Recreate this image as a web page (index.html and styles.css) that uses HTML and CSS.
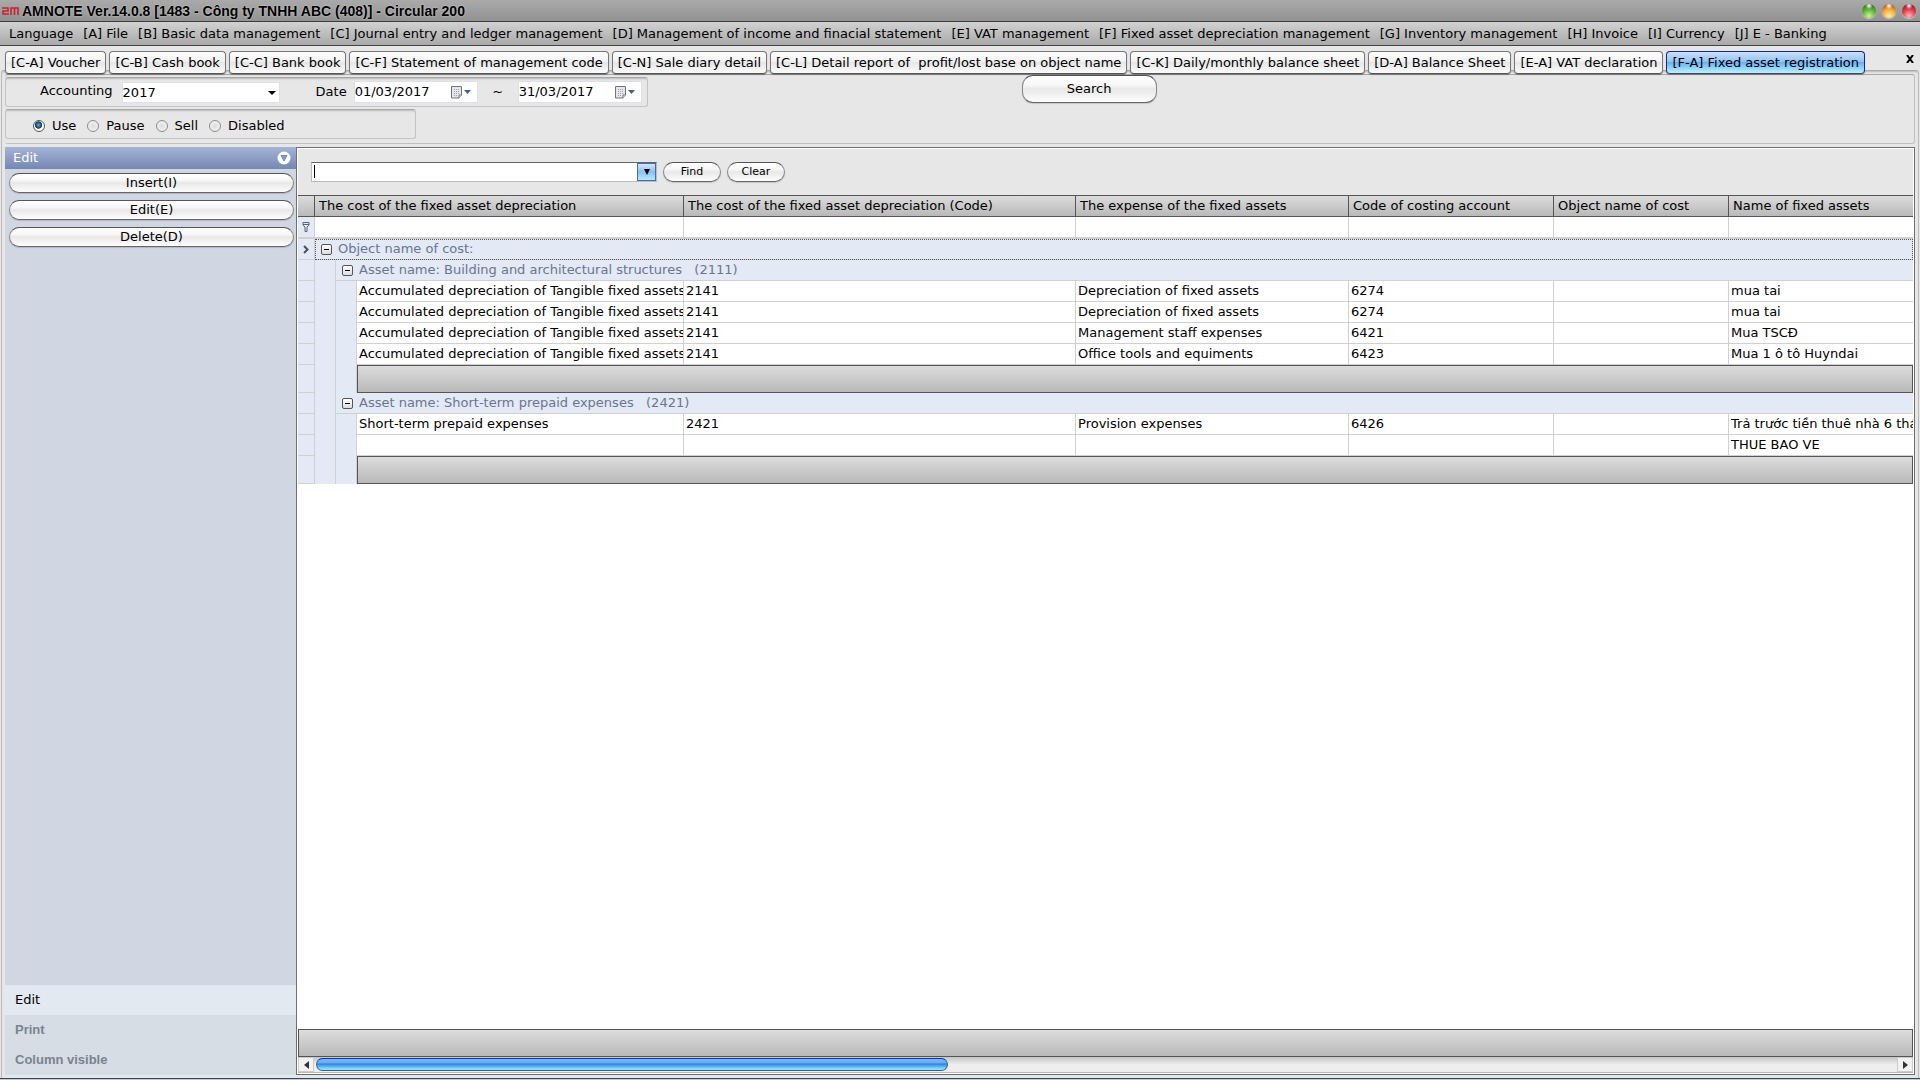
FILE: index.html
```html
<!DOCTYPE html>
<html lang="en">

<head>
    <meta charset="UTF-8">
    <meta name="viewport" content="width=device-width, initial-scale=1.0">
    <title>AMNOTE - Fixed asset registration</title>
    <link rel="stylesheet" href="styles.css">
</head>

<body>
    <header class="titlebar">
        <svg class="logo" width="18" height="10" viewBox="0 0 18 10" fill="none" stroke="#c8232c" stroke-width="1.600">
            <path d="M0 2H6V5H1V8H7M9 9V2H16V9M12.500 2V9" />
        </svg>
        <h1>AMNOTE Ver.14.0.8 [1483 - Công ty TNHH ABC (408)] - Circular 200</h1>
        <div class="window-buttons">
            <button class="dot dot-green" aria-label="Minimize"></button>
            <button class="dot dot-orange" aria-label="Restore"></button>
            <button class="dot dot-red" aria-label="Close"></button>
        </div>
    </header>

    <nav class="menubar">
        <a href="#">Language</a>
        <a href="#">[A] File</a>
        <a href="#">[B] Basic data management</a>
        <a href="#">[C] Journal entry and ledger management</a>
        <a href="#">[D] Management of income and finacial statement</a>
        <a href="#">[E] VAT management</a>
        <a href="#">[F] Fixed asset depreciation management</a>
        <a href="#">[G] Inventory management</a>
        <a href="#">[H] Invoice</a>
        <a href="#">[I] Currency</a>
        <a href="#">[J] E - Banking</a>
    </nav>

    <div class="tabs">
        <button class="tab">[C-A] Voucher</button>
        <button class="tab">[C-B] Cash book</button>
        <button class="tab">[C-C] Bank book</button>
        <button class="tab">[C-F] Statement of management code</button>
        <button class="tab">[C-N] Sale diary detail</button>
        <button class="tab">[C-L] Detail report of&nbsp; profit/lost base on object name</button>
        <button class="tab">[C-K] Daily/monthly balance sheet</button>
        <button class="tab">[D-A] Balance Sheet</button>
        <button class="tab">[E-A] VAT declaration</button>
        <button class="tab active">[F-A] Fixed asset registration</button>
        <button class="tab-close" aria-label="Close tab">
            <svg width="8" height="8" viewBox="0 0 8 8" stroke="#000" stroke-width="2"><path d="M1 0L7 8M7 0L1 8" /></svg>
        </button>
    </div>

    <main class="page">
        <form class="filters">
            <div class="groups">
                <div class="group period">
                    <label class="label-accounting" for="accounting">Accounting</label>
                    <span class="select">
                        <select id="accounting">
                            <option>2017</option>
                        </select>
                    </span>
                    <label class="label-date" for="from">Date</label>
                    <span class="date">
                        <input id="from" type="text" value="01/03/2017">
                        <button type="button" aria-label="Pick start date">
                            <svg width="20" height="13" viewBox="0 0 20 13">
                                <path d="M.5 .5H10.500V9L8 12H.5Z" fill="#e4e6ea" stroke="#77736f" />
                                <path d="M3 3.500H9M3 5.500H9M3 7.500H9M3 9.500H7" stroke="#98a4b8" stroke-dasharray="1 1" />
                                <path d="M8 12V9H10.500" fill="#fff" stroke="#77736f" />
                                <path d="M13 4H20L16.500 8Z" fill="#3f5f95" />
                            </svg>
                        </button>
                    </span>
                    <span class="tilde">~</span>
                    <span class="date">
                        <input id="to" type="text" value="31/03/2017" aria-label="End date">
                        <button type="button" aria-label="Pick end date">
                            <svg width="20" height="13" viewBox="0 0 20 13">
                                <path d="M.5 .5H10.500V9L8 12H.5Z" fill="#e4e6ea" stroke="#77736f" />
                                <path d="M3 3.500H9M3 5.500H9M3 7.500H9M3 9.500H7" stroke="#98a4b8" stroke-dasharray="1 1" />
                                <path d="M8 12V9H10.500" fill="#fff" stroke="#77736f" />
                                <path d="M13 4H20L16.500 8Z" fill="#3f5f95" />
                            </svg>
                        </button>
                    </span>
                </div>
                <div class="group status">
                    <label><input type="radio" name="status" checked>Use</label>
                    <label><input type="radio" name="status">Pause</label>
                    <label><input type="radio" name="status">Sell</label>
                    <label><input type="radio" name="status">Disabled</label>
                </div>
            </div>
            <button class="btn btn-search" type="button">Search</button>
        </form>

        <div class="content">
            <aside class="sidebar">
                <div class="sidebar-head">
                    <span>Edit</span>
                    <svg width="14" height="14" viewBox="0 0 14 14">
                        <circle cx="7" cy="7" r="6.500" fill="#fff" />
                        <path d="M4 4.500H10L7 10Z" fill="#8b9cc6" stroke="#7486b4" />
                    </svg>
                </div>
                <div class="actions">
                    <button class="btn">Insert(I)</button>
                    <button class="btn">Edit(E)</button>
                    <button class="btn">Delete(D)</button>
                </div>
                <nav class="sections">
                    <a class="active" href="#">Edit</a>
                    <a href="#">Print</a>
                    <a href="#">Column visible</a>
                </nav>
            </aside>

            <section class="grid">
                <div class="finder">
                    <div class="combo">
                        <input type="text" aria-label="Find text">
                        <button aria-label="Search history">
                            <svg width="6" height="6" viewBox="0 0 6 6"><path d="M0 0H6L3 6Z" /></svg>
                        </button>
                    </div>
                    <button class="btn btn-small">Find</button>
                    <button class="btn btn-small">Clear</button>
                </div>

                <div class="table-wrap">
                    <table>
                        <colgroup>
                            <col class="c-mark">
                            <col class="c-indent">
                            <col class="c-indent">
                            <col class="c-cost">
                            <col class="c-cost-code">
                            <col class="c-expense">
                            <col class="c-account">
                            <col class="c-object">
                            <col>
                        </colgroup>
                        <thead>
                            <tr>
                                <th></th>
                                <th colspan="3">The cost of the fixed asset depreciation</th>
                                <th>The cost of the fixed asset depreciation (Code)</th>
                                <th>The expense of the fixed assets</th>
                                <th>Code of costing account</th>
                                <th>Object name of cost</th>
                                <th>Name of fixed assets</th>
                            </tr>
                        </thead>
                        <tbody>
                            <tr class="filter-row">
                                <td class="mark">
                                    <svg width="8" height="10" viewBox="0 0 8 10" fill="none" stroke="#5b6577"><path d="M1 .5H7V3L5 5V9.500H3V5L1 3ZM1 2.500H7" /></svg>
                                </td>
                                <td colspan="3"><input type="text" aria-label="Filter cost"></td>
                                <td><input type="text" aria-label="Filter cost code"></td>
                                <td><input type="text" aria-label="Filter expense"></td>
                                <td><input type="text" aria-label="Filter account"></td>
                                <td><input type="text" aria-label="Filter object"></td>
                                <td><input type="text" aria-label="Filter name"></td>
                            </tr>
                            <tr class="group-row focused">
                                <td class="mark">
                                    <svg width="6" height="9" viewBox="0 0 6 9" fill="none" stroke="#46505f" stroke-width="2"><path d="M1 1L4.500 4.500L1 8" /></svg>
                                </td>
                                <td colspan="8"><button class="toggle" aria-label="Collapse"></button>Object name of cost:</td>
                            </tr>
                            <tr class="group-row">
                                <td class="mark"></td>
                                <td class="indent"></td>
                                <td colspan="7"><button class="toggle" aria-label="Collapse"></button>Asset name: Building and architectural structures &nbsp;&nbsp;(2111)</td>
                            </tr>
                            <tr>
                                <td class="mark"></td>
                                <td class="indent"></td>
                                <td class="indent"></td>
                                <td>Accumulated depreciation of Tangible fixed assets</td>
                                <td>2141</td>
                                <td>Depreciation of fixed assets</td>
                                <td>6274</td>
                                <td></td>
                                <td>mua tai</td>
                            </tr>
                            <tr>
                                <td class="mark"></td>
                                <td class="indent"></td>
                                <td class="indent"></td>
                                <td>Accumulated depreciation of Tangible fixed assets</td>
                                <td>2141</td>
                                <td>Depreciation of fixed assets</td>
                                <td>6274</td>
                                <td></td>
                                <td>mua tai</td>
                            </tr>
                            <tr>
                                <td class="mark"></td>
                                <td class="indent"></td>
                                <td class="indent"></td>
                                <td>Accumulated depreciation of Tangible fixed assets</td>
                                <td>2141</td>
                                <td>Management staff expenses</td>
                                <td>6421</td>
                                <td></td>
                                <td>Mua TSCĐ</td>
                            </tr>
                            <tr>
                                <td class="mark"></td>
                                <td class="indent"></td>
                                <td class="indent"></td>
                                <td>Accumulated depreciation of Tangible fixed assets</td>
                                <td>2141</td>
                                <td>Office tools and equiments</td>
                                <td>6423</td>
                                <td></td>
                                <td>Mua 1 ô tô Huyndai</td>
                            </tr>
                            <tr class="summary-row">
                                <td class="mark"></td>
                                <td class="indent"></td>
                                <td class="indent"></td>
                                <td class="summary" colspan="6"></td>
                            </tr>
                            <tr class="group-row">
                                <td class="mark"></td>
                                <td class="indent"></td>
                                <td colspan="7"><button class="toggle" aria-label="Collapse"></button>Asset name: Short-term prepaid expenses &nbsp;&nbsp;(2421)</td>
                            </tr>
                            <tr>
                                <td class="mark"></td>
                                <td class="indent"></td>
                                <td class="indent"></td>
                                <td>Short-term prepaid expenses</td>
                                <td>2421</td>
                                <td>Provision expenses</td>
                                <td>6426</td>
                                <td></td>
                                <td>Trả trước tiền thuê nhà 6 thá</td>
                            </tr>
                            <tr>
                                <td class="mark"></td>
                                <td class="indent"></td>
                                <td class="indent"></td>
                                <td></td>
                                <td></td>
                                <td></td>
                                <td></td>
                                <td></td>
                                <td>THUE BAO VE</td>
                            </tr>
                            <tr class="summary-row">
                                <td class="mark"></td>
                                <td class="indent"></td>
                                <td class="indent"></td>
                                <td class="summary" colspan="6"></td>
                            </tr>
                        </tbody>
                    </table>
                </div>

                <div class="total"></div>
                <div class="scrollbar">
                    <button aria-label="Scroll left">
                        <svg width="5" height="8" viewBox="0 0 5 8" fill="#333"><path d="M5 0V8L0 4Z" /></svg>
                    </button>
                    <div class="track">
                        <div class="thumb"></div>
                    </div>
                    <button aria-label="Scroll right">
                        <svg width="5" height="8" viewBox="0 0 5 8" fill="#333"><path d="M0 0V8L5 4Z" /></svg>
                    </button>
                </div>
            </section>
        </div>
    </main>
    <footer class="edge"></footer>
</body>

</html>
```

FILE: styles.css
```css
* {
    padding: 0;
    margin: 0;
    box-sizing: border-box;
}

body {
    display: flex;
    flex-direction: column;
    height: 100vh;
    overflow: hidden;
    background: #e7e7e7;
    color: #000;
    font: 13px/20px Verdana, "DejaVu Sans", sans-serif;
}

button,
input,
select {
    font: inherit;
    color: inherit;
    border: none;
    background: none;
    outline: none;
    appearance: none;
}

a {
    color: inherit;
    text-decoration: none;
}

/* title bar */
.titlebar {
    display: flex;
    align-items: center;
    height: 22px;
    padding: 0 4px 0 2px;
    background: linear-gradient(#aaa, #929292);
    border-bottom: 1px solid #3c3c3c;
    flex: none;
}

.titlebar h1 {
    flex: 1;
    margin-left: 2px;
    font: bold 14px/20px "Liberation Sans", Arial, sans-serif;
    text-shadow: 0 0 2px #ddd;
}

.window-buttons {
    display: flex;
    gap: 6px;
}

.dot {
    width: 14px;
    height: 14px;
    border-radius: 50%;
    box-shadow: 0 1px 1px #ccc;
}

.dot-green {
    background: radial-gradient(circle at 50% 12%, #fff, transparent 25%), radial-gradient(circle at 50% 85%, #c8f890, #5fae38 50%, #24581a);
}

.dot-orange {
    background: radial-gradient(circle at 50% 12%, #fff, transparent 25%), radial-gradient(circle at 50% 85%, #fff0a0, #f0a83a 50%, #8a3412);
}

.dot-red {
    background: radial-gradient(circle at 50% 12%, #fff, transparent 25%), radial-gradient(circle at 50% 85%, #ffb8b8, #dc3c4a 50%, #6e0c14);
}

/* menu */
.menubar {
    display: flex;
    align-items: center;
    gap: 10px;
    height: 24px;
    padding: 0 9px;
    background: linear-gradient(#d2d2d2, #a9a9a9);
    border-bottom: 1px solid #444;
    white-space: nowrap;
    flex: none;
}

/* tabs */
.tabs {
    position: relative;
    z-index: 1;
    display: flex;
    gap: 3px;
    padding: 5px 5px 0;
    margin-bottom: -4px;
    white-space: nowrap;
    flex: none;
}

.tab {
    height: 23px;
    padding: 0 5px;
    border: 1px solid #777;
    border-bottom: 1px solid #555;
    border-radius: 4px;
    background: linear-gradient(#fdfdfd, #f2f2f2 45%, #e6e6e6 50%, #fbfbfb);
    box-shadow: 0 1px 1px rgba(0, 0, 0, .3);
}

.tab.active {
    border-color: #1a2a7c;
    border-bottom-color: #446;
    background: linear-gradient(#cbe0fa, #94c3f6 45%, #6cb0f4 50%, #baf2ff);
}

.tab-close {
    margin-left: auto;
    width: 10px;
    height: 16px;
    line-height: 0;
}

/* page */
.page {
    flex: 1;
    display: flex;
    flex-direction: column;
    min-height: 0;
    margin: 0 1px;
    padding: 3px;
    border: 1px solid #bbb;
    border-top: 1px solid #aaa;
    border-bottom: none;
    border-radius: 3px 3px 0 0;
    box-shadow: inset 0 2px 2px -1px rgba(0, 0, 0, .2);
}

.filters {
    display: flex;
    align-items: flex-start;
    height: 70px;
    margin-bottom: 3px;
    border: 1px solid #c0c0c0;
    border-top: 1px solid #a8a8a8;
    border-left: none;
    border-radius: 3px;
    flex: none;
}

.groups {
    display: flex;
    flex-direction: column;
    align-items: flex-start;
    gap: 2px;
    padding-top: 2px;
}

.group {
    display: flex;
    align-items: center;
    height: 30px;
    border: 1px solid #c4c4c4;
    border-top: 1px solid #a6a6a6;
    border-radius: 3px;
    box-shadow: inset 0 2px 2px -1px rgba(0, 0, 0, .2);
}

.period {
    padding-right: 5px;
}

.label-accounting {
    padding: 0 9px 2px 34px;
}

.select {
    position: relative;
    margin-right: 36px;
}

.select select {
    display: block;
    width: 158px;
    height: 21px;
    border: 1px solid #dde0e8;
    background: #fff;
}

.select::after {
    content: '';
    position: absolute;
    right: 4px;
    top: 9px;
    border: 4px solid transparent;
    border-top-color: #000;
    border-bottom: none;
}

.label-date {
    margin-right: 7px;
}

.date {
    display: flex;
    align-items: center;
    width: 124px;
    height: 22px;
    padding-right: 6px;
    background: #fff;
    border: 1px solid #dde0e8;
}

.date input {
    flex: 1;
    min-width: 0;
    height: 18px;
}

.date button {
    width: 20px;
    line-height: 0;
}

.tilde {
    width: 40px;
    text-align: center;
}

.status {
    gap: 11px;
    width: 411px;
    padding: 4px 0 0 27px;
}

.status label {
    display: flex;
    align-items: center;
    gap: 7px;
}

.status input {
    width: 12px;
    height: 12px;
    border: 1px solid #8b8b8b;
    border-radius: 50%;
    background: radial-gradient(#ddd, #f8f8f8);
}

.status input:checked {
    border-color: #555;
    background: radial-gradient(circle at 45% 40%, #4fb0e8, #123a5c 40%, #fff 50%);
}

.btn {
    border: 1px solid #888;
    border-top-color: #555;
    border-bottom-color: #666;
    border-radius: 11px;
    background: linear-gradient(#fff, #f7f7f7 35%, #e8e8e8 50%, #fdfdfd);
    box-shadow: 0 1px 1px rgba(0, 0, 0, .15);
}

.btn-search {
    width: 135px;
    height: 28px;
    margin-left: 374px;
}

.content {
    flex: 1;
    display: flex;
    min-height: 0;
}

/* sidebar */
.sidebar {
    display: flex;
    flex-direction: column;
    width: 291px;
    background: #d0d6e2;
    flex: none;
}

.sidebar-head {
    display: flex;
    justify-content: space-between;
    align-items: center;
    height: 22px;
    padding: 0 5px 0 8px;
    background: linear-gradient(#a5b4d6, #7586b2);
    color: #fff;
}

.actions {
    display: flex;
    flex-direction: column;
    gap: 7px;
    padding: 4px 2px 0 4px;
}

.actions .btn {
    height: 20px;
    line-height: 18px;
}

.sections {
    margin-top: auto;
    background: #d6dde5;
}

.sections a {
    display: block;
    height: 30px;
    padding-left: 10px;
    color: #7a8390;
    font: bold 13px/30px "Liberation Sans", Arial, sans-serif;
}

.sections .active {
    background: #e3e9f1;
    color: #000;
    font: 13px/29px Verdana, "DejaVu Sans", sans-serif;
}

/* asset grid */
.grid {
    flex: 1;
    display: flex;
    flex-direction: column;
    min-width: 0;
    padding: 1px;
    border: 1px solid #6f6f6f;
    background: #fff;
}

.finder {
    display: flex;
    align-items: center;
    gap: 6px;
    height: 46px;
    padding-left: 13px;
    background: #e7e7e7;
    flex: none;
}

.combo {
    position: relative;
    display: flex;
    width: 346px;
    height: 20px;
    border: 1px solid #bbb;
    border-top-color: #666;
    background: #fff;
}

.combo::before {
    content: '';
    position: absolute;
    left: 2px;
    top: 2px;
    width: 1px;
    height: 13px;
    background: #000;
}

.combo input {
    flex: 1;
    padding-left: 3px;
}

.combo button {
    width: 19px;
    border: 1px solid #3f6eb0;
    background: linear-gradient(#d5e7fa, #8fbff0 50%, #b5e8ff);
    line-height: 0;
}

.btn-small {
    width: 58px;
    height: 20px;
    font-size: 11px;
    line-height: 18px;
}

.table-wrap {
    flex: 1;
    min-height: 0;
    overflow: hidden;
}

table {
    width: 100%;
    table-layout: fixed;
    border-collapse: separate;
    border-spacing: 0;
}

.c-mark {
    width: 17px;
}

.c-indent {
    width: 21px;
}

.c-cost {
    width: 327px;
}

.c-cost-code {
    width: 392px;
}

.c-expense {
    width: 273px;
}

.c-account {
    width: 205px;
}

.c-object {
    width: 175px;
}

th {
    height: 22px;
    padding-left: 4px;
    border: 1px solid #555;
    border-left: none;
    background: linear-gradient(#dcdcdc, #b9b9b9);
    font-weight: normal;
    line-height: 18px;
    text-align: left;
    white-space: nowrap;
}

td {
    height: 21px;
    padding-left: 2px;
    border-right: 1px solid #d0d0d0;
    border-bottom: 1px solid #d0d0d0;
    line-height: 18px;
    white-space: nowrap;
    overflow: hidden;
}

th:last-child,
td:last-child {
    border-right: none;
}

.mark {
    padding: 0;
    background: #e3e9f5;
    line-height: 0;
    text-align: center;
}

.indent {
    border-bottom: none;
    background: #e3e9f5;
}

.filter-row td {
    height: 22px;
    border-bottom: 2px solid #d0d0d0;
}

.filter-row input {
    display: block;
    width: 100%;
    height: 18px;
}

.group-row td {
    background: #e3e9f5;
}

.group-row td:last-child {
    padding-left: 6px;
    color: #6a7590;
}

.focused td:last-child {
    outline: 1px dotted #555;
    outline-offset: -1px;
}

.toggle {
    position: relative;
    width: 11px;
    height: 11px;
    margin-right: 6px;
    border: 1px solid #555;
    border-radius: 2px;
    background: linear-gradient(#fff, #ddd);
    vertical-align: -1px;
}

.toggle::after {
    content: '';
    position: absolute;
    left: 2px;
    top: 4px;
    width: 5px;
    height: 1px;
    background: #000;
}

.summary-row td {
    height: 28px;
}

.summary-row td.summary,
.total {
    border: 1px solid #555;
    background: linear-gradient(#dcdcdc, #b9b9b9);
}

.total {
    height: 28px;
    flex: none;
}

.scrollbar {
    display: flex;
    height: 16px;
    border-bottom: 1px solid #bbb;
    background: linear-gradient(#c4c4c4, #eee 50%);
    flex: none;
}

.scrollbar button {
    width: 16px;
    border: 1px solid #ccc;
    background: #f2f2f2;
    line-height: 0;
}

.track {
    flex: 1;
    padding: 1px 2px 0;
}

.thumb {
    width: 40%;
    height: 13px;
    border: 1px solid #2a63a8;
    border-top-color: #0a3ab0;
    border-radius: 7px;
    background: linear-gradient(#7fb4ee, #6aaaf0 35%, #2a84e0 45%, #8fdcff 90%);
}

.edge {
    height: 2px;
    border-top: 1px solid #3a4656;
    background: #b8cde2;
    flex: none;
}
```
